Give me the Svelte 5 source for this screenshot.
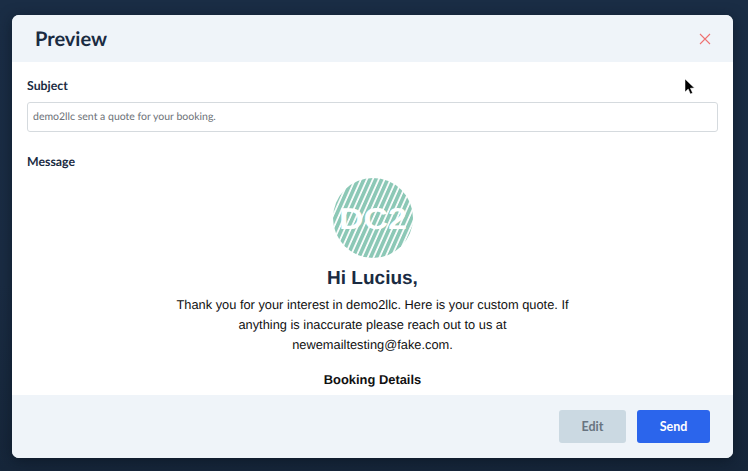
<script lang="ts">
  // Quote preview modal over a dimmed page.
  const subject = 'demo2llc sent a quote for your booking.'
</script>

<div class="page">
  <section class="modal">
    <header class="head">
      <h1>Preview</h1>
      <svg class="close" viewBox="0 0 12 12" width="12" height="12" aria-label="Close">
        <path d="M1 1 L11 11 M11 1 L1 11" />
      </svg>
    </header>

    <div class="body">
      <div class="label">Subject</div>
      <div class="input">{subject}</div>
      <div class="label msg">Message</div>

      <div class="mail">
        <svg class="logo" viewBox="0 0 80 80" width="80" height="80">
          <defs>
            <pattern id="hatch" width="5.4" height="5.4" patternUnits="userSpaceOnUse" patternTransform="rotate(24)">
              <rect width="5.4" height="5.4" fill="#fff" />
              <rect width="3.7" height="5.4" fill="#8cc8b6" />
            </pattern>
          </defs>
          <circle cx="40" cy="40" r="40" fill="url(#hatch)" />
          <text x="40" y="51" class="logo-text" textLength="68" lengthAdjust="spacingAndGlyphs">DC2</text>
        </svg>
        <h2>Hi Lucius,</h2>
        <p>Thank you for your interest in demo2llc. Here is your custom quote. If anything is inaccurate please reach out to us at newemailtesting@fake.com.</p>
        <h3>Booking Details</h3>
      </div>
    </div>

    <footer class="foot">
      <button class="btn edit">Edit</button>
      <button class="btn send">Send</button>
    </footer>

    <svg class="cursor" viewBox="0 0 12 18" width="12" height="18">
      <path d="M1 1 L1 14 L4.2 11 L6.4 16 L8.6 15 L6.4 10.2 L10.4 10 Z" />
    </svg>
  </section>
</div>

<style>
  :global(body) {
    margin: 0;
  }
  .page {
    width: 748px;
    height: 471px;
    box-sizing: border-box;
    padding: 15px 15px 13px 12px;
    background: linear-gradient(180deg, #1a2d45 0%, #1a2c43 60%, #16263a 100%);
    overflow: hidden;
    font-family: Lato, sans-serif;
    text-rendering: geometricPrecision;
  }
  .modal {
    position: relative;
    height: 100%;
    display: flex;
    flex-direction: column;
    background: #fff;
    border-radius: 7px;
    overflow: hidden;
    box-shadow: 0 3px 14px rgba(8, 16, 28, 0.55);
  }
  .head {
    height: 47px;
    flex: none;
    display: flex;
    align-items: center;
    justify-content: space-between;
    padding: 0 22px 0 23px;
    background: #eff4f9;
  }
  h1 {
    margin: 0;
    font-size: 20px;
    font-weight: 700;
    color: #1a2b42;
  }
  .close {
    fill: none;
    stroke: #ee7272;
    stroke-width: 1.1;
  }
  .body {
    flex: 1;
    min-height: 0;
    padding: 16px 15px 0;
    overflow: hidden;
  }
  .label {
    font-size: 12.3px;
    line-height: 16px;
    font-weight: 700;
    color: #1a2b42;
  }
  .input {
    margin-top: 8px;
    height: 28px;
    line-height: 28px;
    padding: 0 5px;
    border: 1px solid #d5dade;
    border-radius: 3px;
    font-size: 10.5px;
    color: #6d7278;
  }
  .msg {
    margin-top: 22px;
  }
  .mail {
    display: flex;
    flex-direction: column;
    align-items: center;
    margin-top: 8px;
    font-family: 'Liberation Sans', Arial, sans-serif;
    text-align: center;
  }
  .logo {
    display: block;
  }
  .logo-text {
    font-family: 'Liberation Sans', Arial, sans-serif;
    font-size: 30px;
    font-weight: 700;
    fill: #fff;
    text-anchor: middle;
  }
  h2 {
    margin: 9px 0 0;
    font-size: 19px;
    line-height: 24px;
    font-weight: 700;
    color: #1a2b42;
  }
  p {
    width: 400px;
    margin: 4px 0 0;
    font-size: 12.83px;
    line-height: 20px;
    color: #111;
  }
  h3 {
    margin: 17px 0 0;
    font-size: 12.9px;
    line-height: 16px;
    font-weight: 700;
    color: #111;
  }
  .foot {
    height: 63px;
    flex: none;
    display: flex;
    justify-content: flex-end;
    gap: 11px;
    padding: 15px 23px 0 0;
    box-sizing: border-box;
    background: #eff4f9;
  }
  .btn {
    height: 33px;
    border: 0;
    border-radius: 3px;
    font-family: Lato, sans-serif;
    font-size: 12.5px;
    font-weight: 700;
  }
  .edit {
    width: 67px;
    background: #cbd9e2;
    color: #687480;
  }
  .send {
    width: 73px;
    background: #2b65ec;
    color: #fff;
  }
  .cursor {
    position: absolute;
    left: 672px;
    top: 63px;
    fill: #000;
    stroke: #fff;
    stroke-width: 0.5;
  }
</style>
